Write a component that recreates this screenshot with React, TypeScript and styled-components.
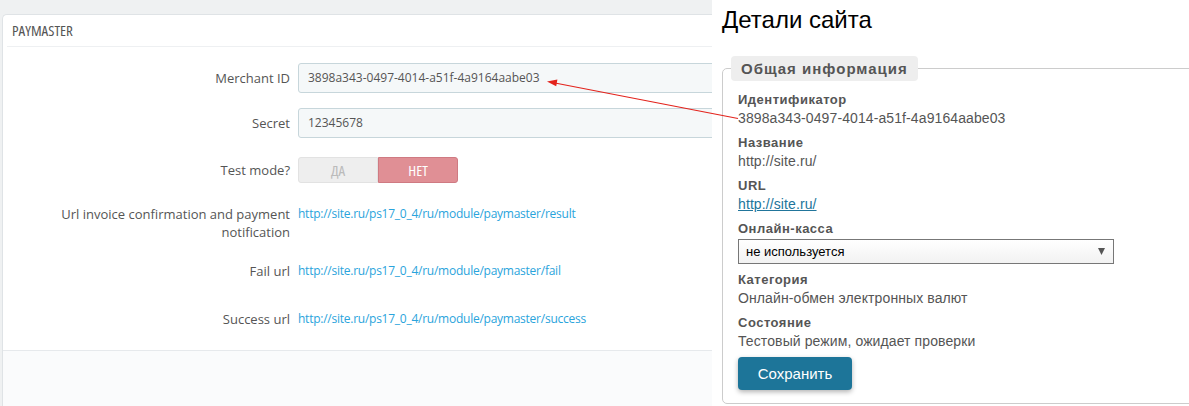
import styled, { createGlobalStyle } from 'styled-components';

const GlobalStyle = createGlobalStyle`
  * { box-sizing: border-box; }
  body {
    margin: 0;
    background: #fff;
  }
`;

const MERCHANT_ID = '3898a343-0497-4014-a51f-4a9164aabe03';

const App = () => {
  return (
    <>
      <GlobalStyle />
      <Screen>
        <AdminArea>
          <Panel>
            <PanelHeading>PAYMASTER</PanelHeading>
            <PanelBody>
              <FormRow $top={0}>
                <FieldLabel>Merchant ID</FieldLabel>
                <TextInput>{MERCHANT_ID}</TextInput>
              </FormRow>
              <FormRow $top={15}>
                <FieldLabel>Secret</FieldLabel>
                <TextInput>12345678</TextInput>
              </FormRow>
              <FormRow $top={19}>
                <FieldLabel $small>Test mode?</FieldLabel>
                <Switch>
                  <SwitchOption>ДА</SwitchOption>
                  <SwitchOption $active>НЕТ</SwitchOption>
                </Switch>
              </FormRow>
              <FormRow $top={22}>
                <TextLabel>Url invoice confirmation and payment notification</TextLabel>
                <UrlText>http://site.ru/ps17_0_4/ru/module/paymaster/result</UrlText>
              </FormRow>
              <FormRow $top={21}>
                <TextLabel>Fail url</TextLabel>
                <UrlText>http://site.ru/ps17_0_4/ru/module/paymaster/fail</UrlText>
              </FormRow>
              <FormRow $top={30}>
                <TextLabel>Success url</TextLabel>
                <UrlText>http://site.ru/ps17_0_4/ru/module/paymaster/success</UrlText>
              </FormRow>
            </PanelBody>
            <PanelFooter />
          </Panel>
        </AdminArea>

        <SiteArea>
          <SiteTitle>Детали сайта</SiteTitle>
          <InfoSet>
            <InfoLegend>Общая информация</InfoLegend>
            <InfoBlock>
              <InfoLabel>Идентификатор</InfoLabel>
              <InfoValue>{MERCHANT_ID}</InfoValue>
            </InfoBlock>
            <InfoBlock>
              <InfoLabel>Название</InfoLabel>
              <InfoValue>http://site.ru/</InfoValue>
            </InfoBlock>
            <InfoBlock>
              <InfoLabel>URL</InfoLabel>
              <InfoValue>
                <InfoLink href="#">http://site.ru/</InfoLink>
              </InfoValue>
            </InfoBlock>
            <InfoBlock>
              <InfoLabel>Онлайн-касса</InfoLabel>
              <SelectBox>
                <span>не используется</span>
                <svg width="7" height="7" viewBox="0 0 8 8">
                  <path d="M0 0h8L4 8z" fill="#555" />
                </svg>
              </SelectBox>
            </InfoBlock>
            <InfoBlock>
              <InfoLabel>Категория</InfoLabel>
              <InfoValue>Онлайн-обмен электронных валют</InfoValue>
            </InfoBlock>
            <InfoBlock>
              <InfoLabel>Состояние</InfoLabel>
              <InfoValue>Тестовый режим, ожидает проверки</InfoValue>
            </InfoBlock>
            <SaveButton>Сохранить</SaveButton>
          </InfoSet>
        </SiteArea>

        <ArrowLayer width="1189" height="406" viewBox="0 0 1189 406">
          <line x1="738" y1="118.5" x2="555" y2="83" stroke="#e3231c" strokeWidth="1.2" />
          <polygon points="547,81.5 557.4,79.6 556.2,86.2" fill="#e3231c" />
        </ArrowLayer>
      </Screen>
    </>
  );
};

export default App;

const Screen = styled.div`
  position: relative;
  display: flex;
  width: 1189px;
  height: 406px;
  overflow: hidden;
`;

const AdminArea = styled.div`
  width: 712px;
  flex: none;
  height: 100%;
  background: #eff1f2;
  padding: 14px 0 0 2px;
  overflow: hidden;
  font-family: 'Open Sans', sans-serif;
  color: #555;
`;

const Panel = styled.section`
  width: 820px;
  height: 100%;
  display: flex;
  flex-direction: column;
  background: #fff;
  border: 1px solid #dfe3e6;
  border-right: none;
  border-bottom: none;
  border-radius: 5px 0 0 0;
`;

const PanelHeading = styled.header`
  height: 32px;
  margin: 0 4px;
  padding-left: 5px;
  line-height: 31px;
  font-size: 15px;
  font-stretch: condensed;
  text-transform: uppercase;
  color: #555;
  border-bottom: 1px solid #eef0f2;
`;

const PanelBody = styled.div`
  flex: 1;
  padding-top: 16px;
`;

const FormRow = styled.div<{ $top: number }>`
  display: grid;
  grid-template-columns: 287px 1fr;
  column-gap: 8px;
  margin-top: ${({ $top }) => $top}px;
`;

const FieldLabel = styled.label<{ $small?: boolean }>`
  text-align: right;
  font-size: 13px;
  line-height: ${({ $small }) => ($small ? 26 : 30)}px;
`;

const TextLabel = styled.div`
  text-align: right;
  font-size: 13px;
  line-height: 18px;
  padding-left: 50px;
`;

const TextInput = styled.div`
  height: 30px;
  padding: 0 9px;
  line-height: 28px;
  font-size: 12px;
  color: #555;
  background: #f5f8f9;
  border: 1px solid #c7d6db;
  border-radius: 3px;
`;

const Switch = styled.div`
  display: flex;
  width: 160px;
  height: 26px;
`;

const SwitchOption = styled.span<{ $active?: boolean }>`
  flex: 1;
  text-align: center;
  line-height: 24px;
  font-size: 15px;
  font-stretch: condensed;
  color: ${({ $active }) => ($active ? '#fff' : '#bbb')};
  background: ${({ $active }) => ($active ? '#e08f95' : '#eee')};
  border: 1px solid ${({ $active }) => ($active ? '#cf7a82' : '#e2e2e2')};
  border-radius: ${({ $active }) => ($active ? '0 3px 3px 0' : '3px 0 0 3px')};
`;

const UrlText = styled.div`
  font-size: 12px;
  line-height: 18px;
  letter-spacing: -0.25px;
  color: #2aa4dc;
`;

const PanelFooter = styled.footer`
  height: 56px;
  flex: none;
  background: #fafbfc;
  border-top: 1px solid #e6e9ec;
`;

const SiteArea = styled.div`
  flex: 1;
  min-width: 0;
  height: 100%;
  background: #fff;
  padding-left: 10px;
  font-family: 'Liberation Sans', Arial, sans-serif;
  color: #555;
`;

const SiteTitle = styled.h1`
  margin: 0;
  padding-top: 6px;
  font-size: 24px;
  line-height: 28px;
  font-weight: normal;
  color: #000;
`;

const InfoSet = styled.fieldset`
  margin: 22px -20px 0 0;
  padding: 10px 15px 13px;
  min-width: 0;
  border: 1px solid #ccc;
  border-radius: 5px;
`;

const InfoLegend = styled.legend`
  margin-left: -7px;
  padding: 0 10px;
  height: 25px;
  line-height: 25px;
  font-size: 15px;
  font-weight: bold;
  letter-spacing: 1px;
  color: #555;
  background: #eee;
  border-radius: 4px;
`;

const InfoBlock = styled.div`
  margin-bottom: 7px;
`;

const InfoLabel = styled.div`
  font-size: 13px;
  font-weight: bold;
  line-height: 18px;
  letter-spacing: 0.5px;
  color: #555;
`;

const InfoValue = styled.div`
  font-size: 14px;
  line-height: 18px;
  letter-spacing: 0.1px;
  color: #555;
`;

const InfoLink = styled.a`
  color: #21759b;
  text-decoration: underline;
`;

const SelectBox = styled.div`
  display: flex;
  align-items: center;
  justify-content: space-between;
  width: 376px;
  height: 25px;
  margin-top: 1px;
  padding: 0 8px 0 7px;
  font-size: 13px;
  color: #000;
  background: linear-gradient(#fff, #f2f2f2);
  border: 1px solid #777;
`;

const SaveButton = styled.button`
  display: block;
  width: 114px;
  height: 33px;
  padding: 0;
  font-family: 'Liberation Sans', Arial, sans-serif;
  font-size: 15px;
  color: #fff;
  background: #1d7599;
  border: none;
  border-radius: 4px;
  box-shadow: 0 2px 5px rgba(0, 0, 0, 0.3);
`;

const ArrowLayer = styled.svg`
  position: absolute;
  left: 0;
  top: 0;
  pointer-events: none;
`;
